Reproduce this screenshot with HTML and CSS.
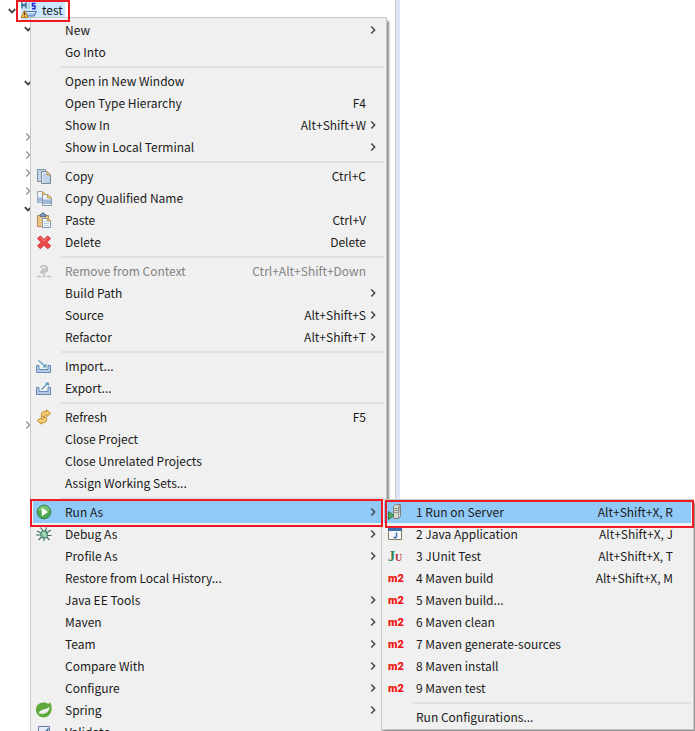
FILE: index.html
```
<!DOCTYPE html>
<html lang="en">
<head>
    <meta charset="UTF-8">
    <meta name="viewport" content="width=device-width, initial-scale=1.0">
    <title>Project Explorer</title>
    <link rel="stylesheet" href="styles.css">
</head>
<body>

<!-- Shared icons -->
<svg class="sprite" xmlns="http://www.w3.org/2000/svg">
    <symbol id="down" viewBox="0 0 8 6"><path d="M.8 1.2L4 4.4 7.2 1.2" fill="none" stroke="currentColor" stroke-width="1.8"/></symbol>
    <symbol id="right" viewBox="0 0 6 8"><path d="M1.300.6L4.700 4 1.300 7.400" fill="none" stroke="currentColor" stroke-width="1.400"/></symbol>
</svg>

<div class="workbench">
    <aside class="explorer">
        <ul class="tree">
            <li class="root">
                <svg class="down"><use href="#down"/></svg>
                <a href="#" class="project">
                    <svg class="icon" viewBox="0 0 16 16">
                        <path d="M4 9.500h11.500l-2.500 4.500H5z" fill="#a9c6ee" stroke="#4a6fb5"/>
                        <path d="M5 10.500h9" stroke="#e8f1fc"/>
                        <path d="M1 6.500V1.500l2 2.500L5 1.500v5" fill="none" stroke="#2f6486" stroke-width="1.300"/>
                        <path d="M8 1.500v5.500" stroke="#7d8791" stroke-dasharray="1 1"/>
                        <path d="M14.500 1.500H11.500v2.500h2.500v2.800h-3" fill="none" stroke="#2a2ad0" stroke-width="1.500"/>
                        <path d="M3.500 8.500L7 15.500H0z" fill="#f8c35a" stroke="#b97b1b"/>
                        <path d="M3.500 10.500v2.300M3.500 13.600v1" stroke="#3e2c0a"/>
                    </svg>
                    <span>test</span>
                </a>
            </li>
            <li><svg class="down"><use href="#down"/></svg></li>
            <li></li>
            <li></li>
            <li><svg class="down"><use href="#down"/></svg></li>
            <li></li>
            <li></li>
            <li><svg class="right"><use href="#right"/></svg></li>
            <li><svg class="right"><use href="#right"/></svg></li>
            <li><svg class="right"><use href="#right"/></svg></li>
            <li><svg class="right"><use href="#right"/></svg></li>
            <li><svg class="down"><use href="#down"/></svg></li>
            <li></li>
            <li></li>
            <li></li>
            <li></li>
            <li></li>
            <li></li>
            <li></li>
            <li></li>
            <li></li>
            <li></li>
            <li></li>
            <li><svg class="right"><use href="#right"/></svg></li>
        </ul>
    </aside>
    <div class="sash"></div>
    <main class="editor"></main>
</div>

<ul class="menu context-menu">
    <li><button><span class="label">New</span><svg class="arrow"><use href="#right"/></svg></button></li>
    <li><button><span class="label">Go Into</span></button></li>
    <li class="separator"></li>
    <li><button><span class="label">Open in New Window</span></button></li>
    <li><button><span class="label">Open Type Hierarchy</span><kbd>F4</kbd></button></li>
    <li><button><span class="label">Show In</span><kbd>Alt+Shift+W</kbd><svg class="arrow"><use href="#right"/></svg></button></li>
    <li><button><span class="label">Show in Local Terminal</span><svg class="arrow"><use href="#right"/></svg></button></li>
    <li class="separator"></li>
    <li><button>
        <svg class="icon" viewBox="0 0 16 16">
            <path d="M1.500 1.500h8v12h-8z" fill="#c3d6e8" stroke="#7c93a6"/>
            <path d="M5.500 3.500H11l3.500 3.500v8.500h-9z" fill="#bcd3ea" stroke="#7b8a8e"/>
            <path d="M6.500 15V4.500H11" fill="none" stroke="#e6eff7"/>
            <path d="M11 3.500V7h3.500z" fill="#f5dfa0" stroke="#b39a58"/>
        </svg>
        <span class="label">Copy</span><kbd>Ctrl+C</kbd></button></li>
    <li><button>
        <svg class="icon" viewBox="0 0 16 16">
            <path d="M1.500 1.500h5l3 3v8h-8z" fill="#eef3f9" stroke="#9aa7b5"/>
            <path d="M2 7.500h6v4H2z" fill="#9db8da"/>
            <path d="M6.500 4.500h5l4 3.500v7.500h-9z" fill="#eef3f9" stroke="#8c98a8"/>
            <path d="M7 9.500h8V14H7z" fill="#9db8da"/>
            <path d="M6.500 1.500v3h3zM11.500 4.500V8h4z" fill="#f3d68a" stroke="#bd9c50"/>
        </svg>
        <span class="label">Copy Qualified Name</span></button></li>
    <li><button>
        <svg class="icon" viewBox="0 0 16 16">
            <path d="M1.500 3.500h11v11h-11z" fill="#edc585" stroke="#b98c4c"/>
            <path d="M4 4.500V2.500h1.500L6 1h2l.5 1.500H10v2z" fill="#7e97bd" stroke="#5b739a"/>
            <path d="M6.500 6.500H12l2.500 2.500v6.500h-8z" fill="#f1f6fb" stroke="#8698ac"/>
            <path d="M8 9.500h3M8 11.500h5M8 13.500h5" stroke="#b6cce4"/>
            <path d="M11.500 6.500V9h3z" fill="#f3d68a" stroke="#bd9c50"/>
        </svg>
        <span class="label">Paste</span><kbd>Ctrl+V</kbd></button></li>
    <li><button>
        <svg class="icon" viewBox="0 0 16 16">
            <path d="M4.500 2L8 5.500 11.500 2l3 2.500L11 8.300l3.700 3.700-3 2.700L8 11.200 4.500 14.700l-3-2.700L5 8.300 1.500 4.500z" fill="#e9494a" stroke="#d2393b" stroke-linejoin="round"/>
            <path d="M4.500 3.500L8 7l3.500-3.500" fill="none" stroke="#f48a86"/>
        </svg>
        <span class="label">Delete</span><kbd>Delete</kbd></button></li>
    <li class="separator"></li>
    <li><button disabled>
        <svg class="icon" viewBox="0 0 16 16">
            <path d="M4.500 4.500c1-2 5-2.500 6.500 0s-.5 5-3 4.500-2-3 0-3 1.500 1.500 1 1.500M4 8.500l5 3.500" fill="none" stroke="#b4b4b4" stroke-width="1.500"/>
            <path d="M1 13.500h4M6.500 13.500h3M11 13.500h4" stroke="#c0c0c0" stroke-width="1.500"/>
        </svg>
        <span class="label">Remove from Context</span><kbd>Ctrl+Alt+Shift+Down</kbd></button></li>
    <li><button><span class="label">Build Path</span><svg class="arrow"><use href="#right"/></svg></button></li>
    <li><button><span class="label">Source</span><kbd>Alt+Shift+S</kbd><svg class="arrow"><use href="#right"/></svg></button></li>
    <li><button><span class="label">Refactor</span><kbd>Alt+Shift+T</kbd><svg class="arrow"><use href="#right"/></svg></button></li>
    <li class="separator"></li>
    <li><button>
        <svg class="icon" viewBox="0 0 16 16">
            <path d="M.5 7.500h2.500v4h9v-4h2.500v7H.5z" fill="#b4cae6" stroke="#6688b8"/>
            <path d="M2.500 2.500l7 6" stroke="#5c9bbf" stroke-width="1.300"/>
            <path d="M10.500 5.500v4H6.500z" fill="#5c9bbf"/>
        </svg>
        <span class="label">Import...</span></button></li>
    <li><button>
        <svg class="icon" viewBox="0 0 16 16">
            <path d="M.5 7.500h2.500v4h9v-4h2.500v7H.5z" fill="#b4cae6" stroke="#6688b8"/>
            <path d="M5.500 9.500l6-6" stroke="#5c9bbf" stroke-width="1.300"/>
            <path d="M9 2.500h4v4z" fill="#5c9bbf"/>
        </svg>
        <span class="label">Export...</span></button></li>
    <li class="separator"></li>
    <li><button>
        <svg class="icon" viewBox="0 0 16 16">
            <path d="M5.500 7.500C4.500 3.500 7 1.500 10.500 2.500V.8L14.800 4.500l-4.300 3V5.800C8.500 5.300 8 6 8.500 8z" fill="#f7cf72" stroke="#c58a2c" stroke-linejoin="round"/>
            <path d="M10.500 8.500c1 4-1.500 6-5 5v1.700L1.200 11.500l4.300-3v1.700c2 .5 2.500-.2 2-2.200z" fill="#f7cf72" stroke="#c58a2c" stroke-linejoin="round"/>
        </svg>
        <span class="label">Refresh</span><kbd>F5</kbd></button></li>
    <li><button><span class="label">Close Project</span></button></li>
    <li><button><span class="label">Close Unrelated Projects</span></button></li>
    <li><button><span class="label">Assign Working Sets...</span></button></li>
    <li class="separator"></li>
    <li class="open marked">
        <button>
            <svg class="icon" viewBox="0 0 16 16">
                <circle cx="8" cy="8" r="6.800" fill="#4caa4e" stroke="#2d7a3c"/>
                <path d="M2.500 7a5.500 5.500 0 0 1 11 0z" fill="#7cc47a"/>
                <path d="M5.800 3.800v8.400L12 8z" fill="#fff"/>
            </svg>
            <span class="label">Run As</span><svg class="arrow"><use href="#right"/></svg>
        </button>

        <ul class="menu submenu">
            <li class="open marked"><button>
                <svg class="icon" viewBox="0 0 16 16">
                    <path d="M6.500 2.500l2-2h5v12l-2 2h-5z" fill="#d9dcd4" stroke="#7b8078"/>
                    <path d="M11.500 14V2.500l2-2" fill="#a8aca4" stroke="#8b9088"/>
                    <path d="M7.500 4.500h3M7.500 6.500h3M7.500 8.500h3" stroke="#7d8b80"/>
                    <path d="M1.500 7.500v8l5.500-4z" fill="#4fb35e" stroke="#2b7a42"/>
                </svg>
                <span class="label">1 Run on Server</span><kbd>Alt+Shift+X, R</kbd></button></li>
            <li><button>
                <svg class="icon" viewBox="0 0 16 16">
                    <path d="M1.500 2.500h13v11h-13z" fill="#f4f8fd" stroke="#8a7a55"/>
                    <path d="M1 2h14v3H1z" fill="#3f6fae"/>
                    <path d="M9.500 6.500v4c0 1.500-2 1.500-3 .5" fill="none" stroke="#3f6fae" stroke-width="1.500"/>
                </svg>
                <span class="label">2 Java Application</span><kbd>Alt+Shift+X, J</kbd></button></li>
            <li><button>
                <svg class="icon" viewBox="0 0 16 16">
                    <text x="1" y="13" class="ju-text">J<tspan class="ju-u">U</tspan></text>
                </svg>
                <span class="label">3 JUnit Test</span><kbd>Alt+Shift+X, T</kbd></button></li>
            <li><button><span class="m2">m2</span><span class="label">4 Maven build</span><kbd>Alt+Shift+X, M</kbd></button></li>
            <li><button><span class="m2">m2</span><span class="label">5 Maven build...</span></button></li>
            <li><button><span class="m2">m2</span><span class="label">6 Maven clean</span></button></li>
            <li><button><span class="m2">m2</span><span class="label">7 Maven generate-sources</span></button></li>
            <li><button><span class="m2">m2</span><span class="label">8 Maven install</span></button></li>
            <li><button><span class="m2">m2</span><span class="label">9 Maven test</span></button></li>
            <li class="separator"></li>
            <li><button><span class="label">Run Configurations...</span></button></li>
        </ul>
    </li>
    <li><button>
        <svg class="icon" viewBox="0 0 16 16">
            <path d="M1 5l4 2M4.500 1.500L7 5M10.500 1.500L9.500 5M15 4l-4 2.500M0 9h5M15.500 9.500H11M2.500 14L6 10.500M8 15v-4M13.500 14L10.500 11" stroke="#3c6f66" stroke-width="1.100"/>
            <ellipse cx="8.200" cy="8.500" rx="3.400" ry="3.800" fill="#8cc7a4" stroke="#37705f"/>
            <path d="M6 6l4.500 5" stroke="#d2efdc"/>
        </svg>
        <span class="label">Debug As</span><svg class="arrow"><use href="#right"/></svg></button></li>
    <li><button><span class="label">Profile As</span><svg class="arrow"><use href="#right"/></svg></button></li>
    <li><button><span class="label">Restore from Local History...</span></button></li>
    <li><button><span class="label">Java EE Tools</span><svg class="arrow"><use href="#right"/></svg></button></li>
    <li><button><span class="label">Maven</span><svg class="arrow"><use href="#right"/></svg></button></li>
    <li><button><span class="label">Team</span><svg class="arrow"><use href="#right"/></svg></button></li>
    <li><button><span class="label">Compare With</span><svg class="arrow"><use href="#right"/></svg></button></li>
    <li><button><span class="label">Configure</span><svg class="arrow"><use href="#right"/></svg></button></li>
    <li><button>
        <svg class="icon" viewBox="0 0 16 16">
            <path d="M14.200.3c2.200 4.700 2 10-1.200 13s-8 2.800-10.800 0-3-7.800-.3-10.500 7.300-3 10.100-.8c1-.5 1.700-.9 2.200-1.700z" fill="#5fa83a"/>
            <path d="M2.800 11.500C4 6 10.500 8.500 13.500 4.500c.3 5-4 8.500-10.700 7z" fill="#f0f0f0"/>
            <path d="M3 13.500c3 .8 6.500.5 9-2.500" fill="none" stroke="#5fa83a"/>
        </svg>
        <span class="label">Spring</span><svg class="arrow"><use href="#right"/></svg></button></li>
    <li><button>
        <svg class="icon" viewBox="0 0 16 16">
            <path d="M2.500 2.500h11v11h-11z" fill="#e4edf7" stroke="#5f7ea6"/>
            <path d="M4.500 8l3 3 5-6.500" fill="none" stroke="#44658f" stroke-width="1.500"/>
        </svg>
        <span class="label">Validate</span></button></li>
</ul>

</body>
</html>
```
FILE: styles.css
```
:root {
    --menu-bg: #f0f0f0;
    --menu-border: #c8c8c8;
    --line: #e0e0e0;
    --highlight: #91c9f7;
    --mark: #ed1c24;
    --text: #1a1a1a;
}

* { margin: 0; padding: 0; box-sizing: border-box; }

body {
    height: 100vh;
    overflow: hidden;
    position: relative;
    background: #fff;
    color: var(--text);
    font-family: "Noto Sans CJK KR", sans-serif;
    font-size: 12px;
    line-height: 16px;
}

ul { list-style: none; }
svg { display: block; flex: none; }
.sprite { position: absolute; width: 0; height: 0; }
.icon { width: 16px; height: 16px; }

/* --- Workbench behind the menus --- */
.workbench {
    display: flex;
    height: 100%;
}
.explorer {
    width: 395px;
    overflow: hidden;
}
.sash {
    width: 5px;
    background: #dfe5f5;
    border-left: 1px solid #c6cad4;
}
.editor { flex: 1; }

.tree { padding-top: 2px; }
.tree li {
    height: 18px;
    padding-left: 24px;
    display: flex;
    align-items: center;
}
.tree .root { padding-left: 8px; }
.down {
    width: 8px;
    height: 6px;
    color: #404040;
}
.right {
    width: 6px;
    height: 10px;
    margin-left: 1px;
    color: #969696;
}
.project {
    position: relative;
    display: flex;
    gap: 5px;
    height: 18px;
    margin-left: 5px;
    padding-right: 2px;
    background: #cce8ff;
    color: inherit;
    text-decoration: none;
}
.project::after {
    content: "";
    position: absolute;
    inset: -2px -5px -2px -5px;
    border: 2px solid var(--mark);
    z-index: 2;
}

/* --- Menus --- */
.menu {
    position: absolute;
    padding: 1px 2px;
    background: var(--menu-bg);
    border: 1px solid var(--menu-border);
    box-shadow: 2px 4px 2px #8c8c8c;
}
.context-menu {
    left: 30px;
    top: 17px;
    width: 357px;
}
.submenu {
    left: 348px;
    top: -2px;
    width: 313px;
    z-index: 1;
}

.menu button {
    display: flex;
    align-items: center;
    width: 100%;
    height: 22px;
    padding: 0 8px 0 3px;
    border: 0;
    background: none;
    color: inherit;
    font: inherit;
    text-align: left;
}
.menu button:disabled { color: #838383; }
.label {
    flex: 1;
    padding-left: 13px;
}
.label:first-child { padding-left: 29px; }
kbd {
    font: inherit;
    margin-right: 10px;
}
.arrow {
    width: 6px;
    height: 8px;
    color: #404040;
}
kbd + .arrow { margin-left: -6px; }

.separator {
    height: 7px;
    padding: 3px 0 2px 28px;
}
.separator::before {
    content: "";
    display: block;
    height: 2px;
    background: var(--line);
}

.open { position: relative; }
.open > button { background: var(--highlight); }
.marked::after {
    content: "";
    position: absolute;
    inset: -2px 1px -4px -3px;
    border: 2px solid var(--mark);
    z-index: 2;
}
.submenu .marked::after { inset: -1px -3px -5px 1px; }

/* --- Lettered icons --- */
.m2 {
    width: 16px;
    padding: 2px 0 0 1px;
    font-family: Roboto, sans-serif;
    font-size: 11px;
    font-weight: 900;
    color: #f01414;
}
.ju-text {
    font-family: "Liberation Serif", serif;
    font-size: 14px;
    font-weight: 700;
    fill: #2f8050;
}
.ju-u {
    font-size: 10px;
    fill: #b8283c;
}
```
